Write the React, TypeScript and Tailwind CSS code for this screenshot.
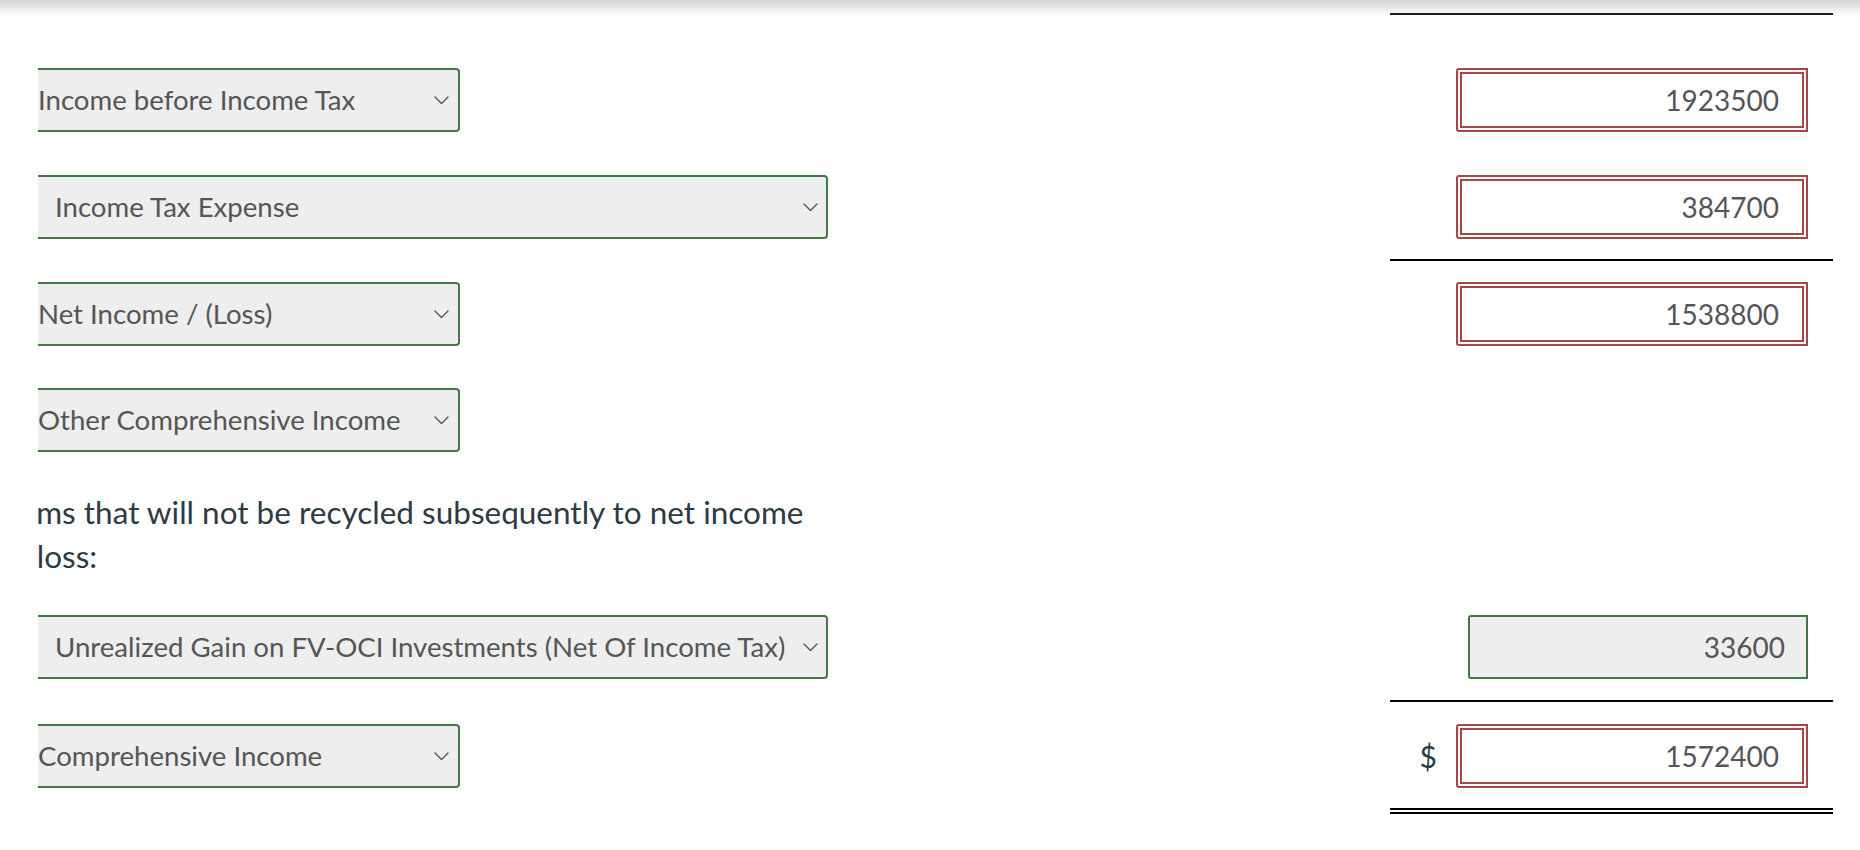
import React from 'react';

type Row = {
  label: string;
  wide?: boolean;
  value?: string;
  kind?: 'error' | 'ok';
  dollar?: boolean;
};

function Chevron() {
  return (
    <svg width="15" height="9" viewBox="0 0 15 9" fill="none" className="flex-shrink-0">
      <path d="M1 1l6.5 6.5L14 1" stroke="#555" strokeWidth="1.4" strokeLinecap="round" strokeLinejoin="round" />
    </svg>
  );
}

function SelectBox({ label, wide }: { label: string; wide?: boolean }) {
  return (
    <div
      className={
        wide
          ? 'w-[790px] h-full flex items-center justify-between bg-[#eeeeee] border-2 border-l-0 border-[#437a41] rounded-r-[4px] pl-[17px] pr-[8px] text-[27.6px] text-[#555555]'
          : 'w-[422px] h-full flex items-center justify-between bg-[#eeeeee] border-2 border-l-0 border-[#437a41] rounded-r-[4px] pl-0 pr-[9px] text-[27.6px] text-[#555555]'
      }
    >
      <span className="whitespace-nowrap">{label}</span>
      <Chevron />
    </div>
  );
}

function ValueBox({ value, kind }: { value: string; kind: 'error' | 'ok' }) {
  if (kind === 'ok') {
    return (
      <div className="w-[340px] h-full flex items-center justify-end bg-[#eeeeee] border-2 border-[#437a41] rounded-l-[3px] pr-[21px] text-[28px] text-[#555555]">
        {value}
      </div>
    );
  }
  return (
    <div className="w-[352px] h-full flex items-center justify-end bg-white border-[6px] border-double border-[#a84545] rounded-l-[3px] pr-[23px] text-[28px] text-[#555555]">
      {value}
    </div>
  );
}

function LineRow({ rows }: { rows: Row }) {
  return (
    <div className="flex h-[64px]">
      <div className="flex-1 pl-[38px]">
        <SelectBox label={rows.label} wide={rows.wide} />
      </div>
      <div className="w-[443px] mr-[27px] flex items-center justify-end pr-[25px] gap-[19px]">
        {rows.dollar && <span className="text-[30px] text-[#2d3b45]">$</span>}
        {rows.value && <ValueBox value={rows.value} kind={rows.kind ?? 'error'} />}
      </div>
    </div>
  );
}

function Rule({ double }: { double?: boolean }) {
  return (
    <div className="flex">
      <div className="flex-1" />
      <div
        className={
          double
            ? 'w-[443px] mr-[27px] border-b-[6px] border-double border-black'
            : 'w-[443px] mr-[27px] border-b-2 border-black'
        }
      />
    </div>
  );
}

export default function App() {
  return (
    <div className="relative w-[1860px] h-[850px] bg-white overflow-hidden font-['Lato',sans-serif]">
      {/* header shadow */}
      <div className="absolute top-0 left-0 right-0 h-[16px] bg-gradient-to-b from-[#d4d4d4] to-transparent pointer-events-none" />

      <div className="h-[13px]" />
      <Rule />

      <div className="mt-[53px]">
        <LineRow rows={{ label: 'Income before Income Tax', value: '1923500' }} />
      </div>
      <div className="mt-[43px]">
        <LineRow rows={{ label: 'Income Tax Expense', wide: true, value: '384700' }} />
      </div>
      <div className="mt-[20px]">
        <Rule />
      </div>
      <div className="mt-[21px]">
        <LineRow rows={{ label: 'Net Income / (Loss)', value: '1538800' }} />
      </div>
      <div className="mt-[42px]">
        <LineRow rows={{ label: 'Other Comprehensive Income' }} />
      </div>

      {/* section caption, left part scrolled out of view */}
      <div className="mt-[38px] ml-[38px] w-[860px] overflow-hidden">
        <p className="-ml-[38px] w-[832px] text-[31.5px] leading-[44px] text-[#2d3b45]">
          Items that will not be recycled subsequently to net income or loss:
        </p>
      </div>

      <div className="mt-[37px]">
        <LineRow rows={{ label: 'Unrealized Gain on FV-OCI Investments (Net Of Income Tax)', wide: true, value: '33600', kind: 'ok' }} />
      </div>
      <div className="mt-[21px]">
        <Rule />
      </div>
      <div className="mt-[22px]">
        <LineRow rows={{ label: 'Comprehensive Income', value: '1572400', dollar: true }} />
      </div>
      <div className="mt-[20px]">
        <Rule double />
      </div>
    </div>
  );
}
